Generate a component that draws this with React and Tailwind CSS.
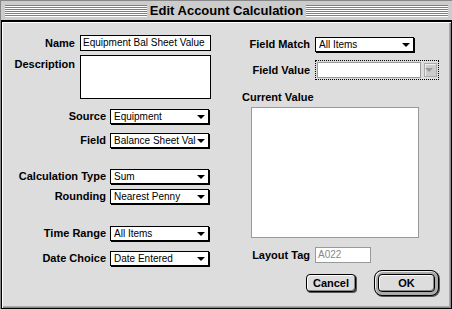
import React from 'react';

const label = "font-['Liberation_Sans',Arial,sans-serif] font-bold text-[11px] text-black leading-none";
const fieldText = "font-['Liberation_Sans',Arial,sans-serif] text-[10px] text-black leading-none";

function Stripes() {
    return (
        <div className="flex-1 flex flex-col">
            {[0, 1, 2, 3, 4, 5].map((i) => (
                <div key={i} className="h-[2px] border-t border-[#808080] bg-white" />
            ))}
        </div>
    );
}

function Arrow({ color = 'border-t-black' }) {
    return (
        <span className={`absolute right-[3px] top-1/2 -translate-y-1/2 w-0 h-0 border-l-[4px] border-r-[4px] border-t-[4px] border-l-transparent border-r-transparent ${color}`} />
    );
}

function Popup({ value, className }) {
    return (
        <div className={`relative h-[15px] bg-white border border-black shadow-[1px_1px_0_#000] flex items-center pl-[3px] pr-[12px] ${className}`}>
            <span className={`${fieldText} flex-1 overflow-hidden whitespace-nowrap`}>{value}</span>
            <Arrow />
        </div>
    );
}

function Row({ text, labelW, children, className = '' }) {
    return (
        <div className={`flex items-center ${className}`}>
            <span className={`${label} ${labelW} text-right shrink-0`}>{text}</span>
            {children}
        </div>
    );
}

export default function App() {
    return (
        <div className="w-[452px] h-[309px] flex flex-col bg-[#cccccc] border-t border-l border-[#888]">
            {/* title bar */}
            <div className="h-[19px] flex items-center pl-[4px] pr-[4px] gap-[3px]">
                <Stripes />
                <span className="font-['Liberation_Sans',Arial,sans-serif] font-bold text-[13px] leading-none text-black">
                    Edit Account Calculation
                </span>
                <Stripes />
            </div>

            {/* content */}
            <div className="flex-1 flex bg-[#dddddd] border-t-2 border-l border-r border-b border-black shadow-[inset_1px_1px_0_#fff,inset_-1px_-1px_0_#888,inset_-2px_-2px_0_#aaa]">
                {/* left column */}
                <div className="w-[225px] flex flex-col pt-[13px]">
                    <Row text="Name" labelW="w-[73px]">
                        <div className="ml-[5px] w-[131px] h-[16px] bg-white border border-black flex items-center pl-[2px] whitespace-nowrap overflow-hidden">
                            <span className={fieldText}>Equipment Bal Sheet Value</span>
                        </div>
                    </Row>
                    <div className="flex items-start mt-[4px]">
                        <span className={`${label} w-[73px] text-right pt-[4px]`}>Description</span>
                        <div className="ml-[5px] w-[131px] h-[44px] bg-white border border-black" />
                    </div>

                    <Row text="Source" labelW="w-[104px]" className="mt-[10px]">
                        <Popup value="Equipment" className="ml-[4px] w-[99px]" />
                    </Row>
                    <Row text="Field" labelW="w-[104px]" className="mt-[9px]">
                        <Popup value="Balance Sheet Value" className="ml-[4px] w-[99px]" />
                    </Row>

                    <Row text="Calculation Type" labelW="w-[104px]" className="mt-[21px]">
                        <Popup value="Sum" className="ml-[4px] w-[99px]" />
                    </Row>
                    <Row text="Rounding" labelW="w-[104px]" className="mt-[5px]">
                        <Popup value="Nearest Penny" className="ml-[4px] w-[99px]" />
                    </Row>

                    <Row text="Time Range" labelW="w-[104px]" className="mt-[22px]">
                        <Popup value="All Items" className="ml-[4px] w-[99px]" />
                    </Row>
                    <Row text="Date Choice" labelW="w-[104px]" className="mt-[10px]">
                        <Popup value="Date Entered" className="ml-[4px] w-[99px]" />
                    </Row>
                </div>

                {/* right column */}
                <div className="flex-1 flex flex-col pt-[15px]">
                    <Row text="Field Match" labelW="w-[83px]">
                        <Popup value="All Items" className="ml-[5px] w-[99px]" />
                    </Row>
                    <Row text="Field Value" labelW="w-[83px]" className="mt-[8px]">
                        <div className="ml-[5px] w-[124px] h-[20px] border border-dotted border-black flex items-center px-[1px] gap-[3px]">
                            <div className="w-[105px] h-[16px] bg-white border border-[#999]" />
                            <div className="relative w-[13px] h-[14px] bg-[#cccccc] border border-[#aaa] shadow-[inset_1px_1px_0_#eee]">
                                <Arrow color="border-t-[#999]" />
                            </div>
                        </div>
                    </Row>

                    <span className={`${label} ml-[15px] mt-[12px]`}>Current Value</span>
                    <div className="ml-[24px] mt-[4px] w-[168px] h-[131px] bg-white border border-[#999]" />

                    <Row text="Layout Tag" labelW="w-[83px]" className="mt-[9px]">
                        <div className="ml-[5px] w-[56px] h-[16px] bg-white border border-[#999] flex items-center pl-[2px]">
                            <span className="font-['Liberation_Sans',Arial,sans-serif] text-[10px] leading-none text-[#888]">A022</span>
                        </div>
                    </Row>

                    <div className="flex items-center mt-[7px] ml-[79px] gap-[18px]">
                        <button className="w-[50px] h-[18px] rounded-[4px] border border-black bg-[#dddddd] shadow-[inset_1px_1px_0_#fff,inset_-1px_-1px_0_#888,1px_1px_0_#555] flex items-center justify-center">
                            <span className={label}>Cancel</span>
                        </button>
                        <div className="w-[65px] h-[26px] rounded-[8px] border border-black bg-[#aaaaaa] shadow-[inset_1px_1px_0_#eee,1px_1px_0_#555] p-[3px] flex">
                            <button className="flex-1 rounded-[4px] border border-black bg-[#dddddd] shadow-[inset_1px_1px_0_#fff,inset_-1px_-1px_0_#888] flex items-center justify-center">
                                <span className={label}>OK</span>
                            </button>
                        </div>
                    </div>
                </div>
            </div>
        </div>
    );
}
